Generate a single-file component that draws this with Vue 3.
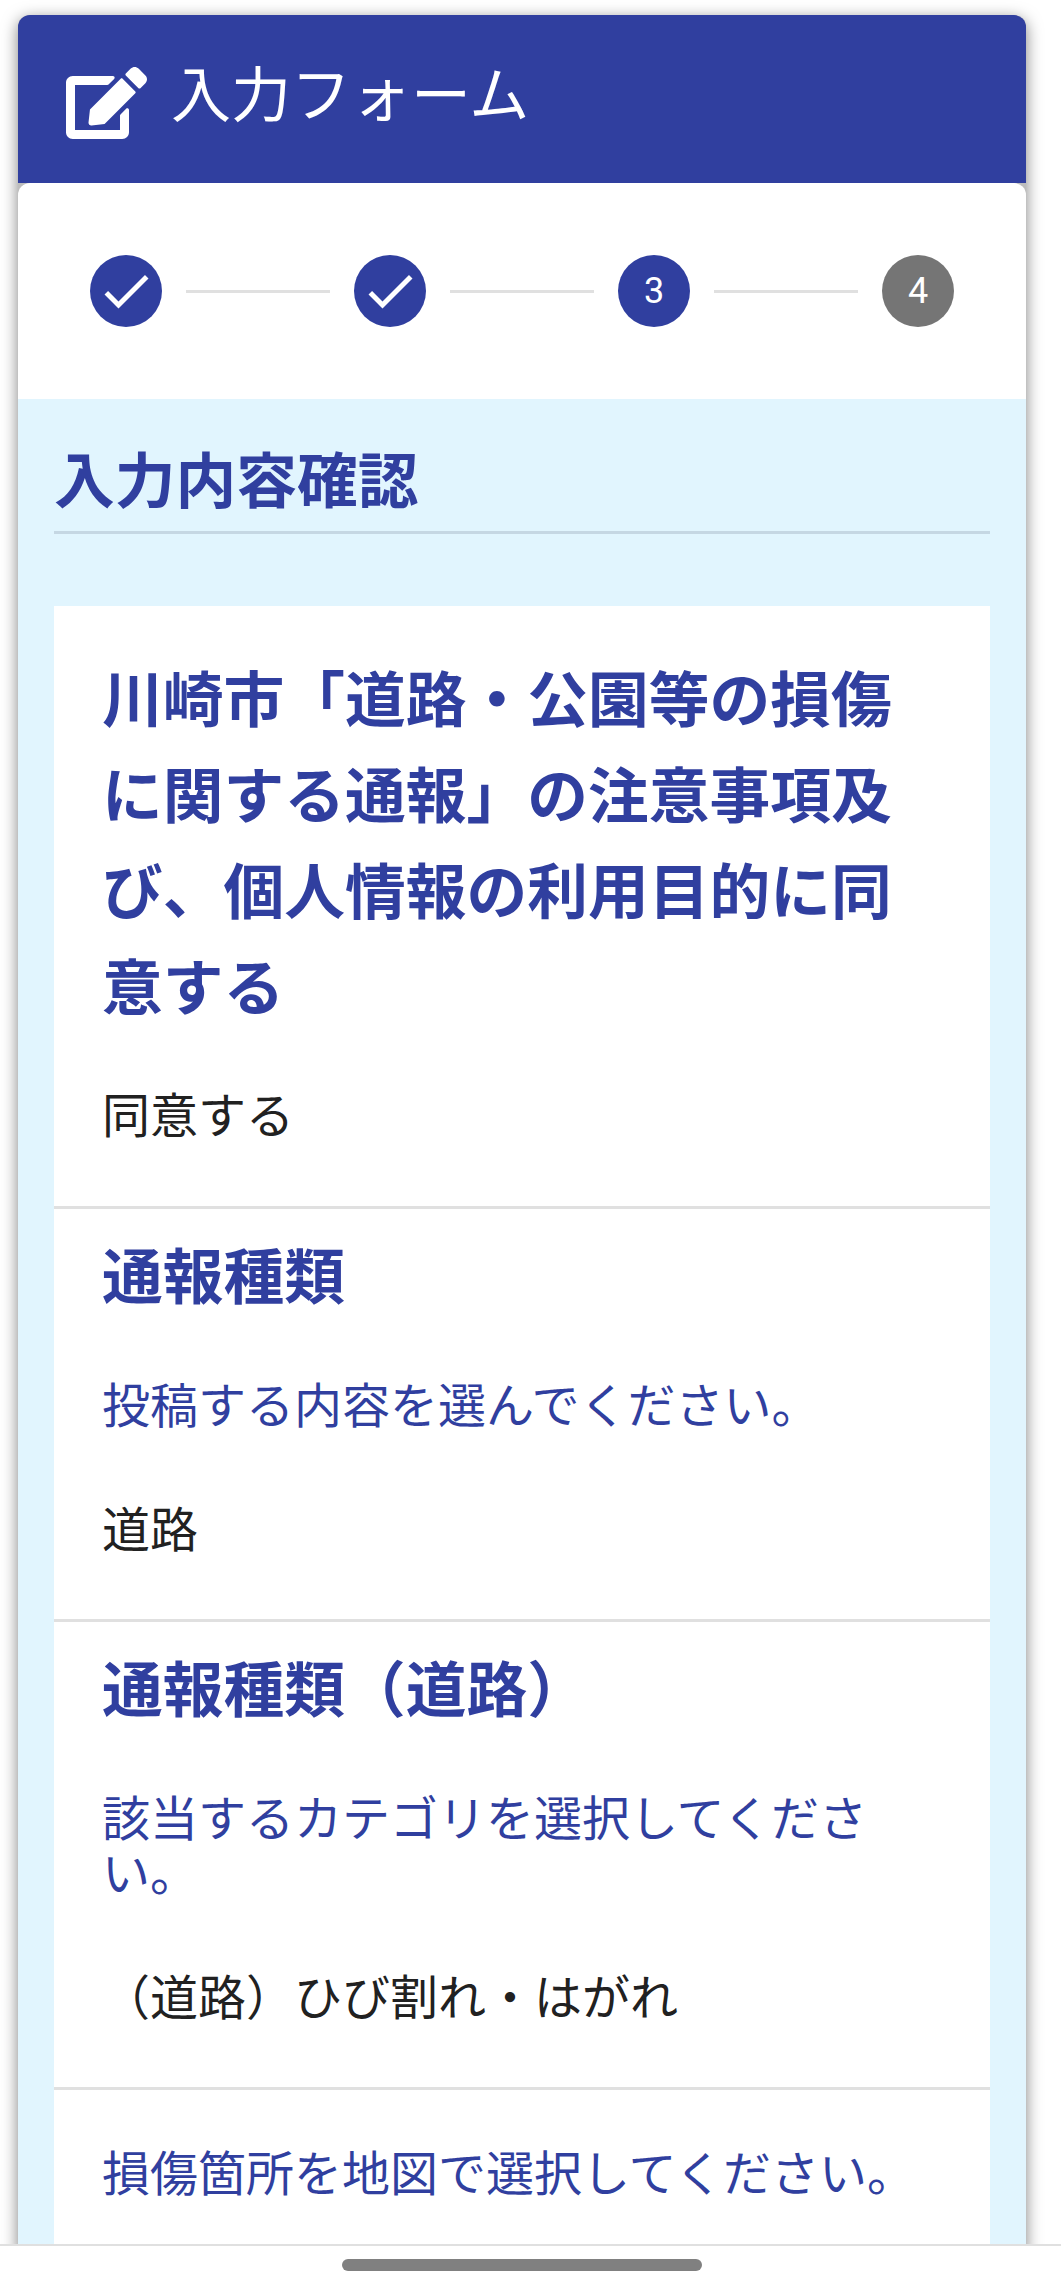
<template>
  <div class="page">
    <div class="form-card">
      <header class="form-header">
        <svg class="edit-icon" viewBox="0 0 576 512" aria-hidden="true">
          <path fill="#fff" d="M402.6 83.2l90.2 90.2c3.8 3.8 3.8 10 0 13.8L274.4 405.6l-92.8 10.3c-12.4 1.4-22.9-9.1-21.5-21.5l10.3-92.8L388.8 83.2c3.8-3.8 10-3.8 13.8 0zm162-22.9l-48.8-48.8c-15.2-15.2-39.9-15.2-55.2 0l-35.4 35.4c-3.8 3.8-3.8 10 0 13.8l90.2 90.2c3.8 3.8 10 3.8 13.8 0l35.4-35.4c15.2-15.3 15.2-40 0-55.2zM384 346.2V448H64V128h229.8c3.2 0 6.2-1.3 8.5-3.5l40-40c7.6-7.6 2.2-20.5-8.5-20.5H48C21.5 64 0 85.5 0 112v352c0 26.5 21.5 48 48 48h352c26.5 0 48-21.5 48-48V306.2c0-10.7-12.9-16-20.5-8.5l-40 40c-2.2 2.3-3.5 5.3-3.5 8.5z"/>
        </svg>
        <h1 class="form-title">入力フォーム</h1>
      </header>

      <div class="form-body">
        <div class="stepper">
          <template v-for="(step, i) in steps" :key="step.label">
            <div class="step" :class="{ pending: step.pending }">
              <svg v-if="step.done" class="check" viewBox="0 0 24 24" aria-hidden="true">
                <path fill="#fff" d="M9 16.17L4.83 12l-1.42 1.41L9 19 21 7l-1.41-1.41z"/>
              </svg>
              <span v-else>{{ step.label }}</span>
            </div>
            <div v-if="i < steps.length - 1" class="connector"></div>
          </template>
        </div>

        <section class="confirm">
          <h2 class="confirm-title">入力内容確認</h2>

          <div class="answers">
            <div class="answer-row first">
              <h3 class="question">川崎市「道路・公園等の損傷に関する通報」の注意事項及び、個人情報の利用目的に同意する</h3>
              <p class="answer">同意する</p>
            </div>
            <div class="answer-row">
              <h3 class="question">通報種類</h3>
              <p class="hint">投稿する内容を選んでください。</p>
              <p class="answer">道路</p>
            </div>
            <div class="answer-row">
              <h3 class="question">通報種類（道路）</h3>
              <p class="hint">該当するカテゴリを選択してください。</p>
              <p class="answer">（道路）ひび割れ・はがれ</p>
            </div>
            <div class="answer-row last">
              <p class="hint">損傷箇所を地図で選択してください。</p>
            </div>
          </div>
        </section>
      </div>
    </div>

    <div class="nav-bar">
      <div class="home-pill"></div>
    </div>
  </div>
</template>

<script setup>
const steps = [
  { label: '1', done: true },
  { label: '2', done: true },
  { label: '3' },
  { label: '4', pending: true }
]
</script>

<style>
body {
  margin: 0;
  background: #fff;
}
</style>

<style scoped>
.page {
  position: relative;
  height: 2291px;
  overflow: hidden;
  box-sizing: border-box;
  padding: 15px 35px 0 18px;
  background: #fff;
  font-family: Roboto, "Noto Sans CJK JP", sans-serif;
  color: #212121;
}

.form-card {
  border-radius: 12px 12px 0 0;
  box-shadow: 0 4px 16px rgba(0, 0, 0, 0.5);
  background: #bdbdbd;
}

.form-header {
  display: flex;
  align-items: center;
  height: 168px;
  padding-left: 48px;
  background: #303f9f;
  border-radius: 12px 12px 0 0;
  color: #fff;
}

.edit-icon {
  width: 81px;
  height: 72px;
  margin-top: 8px;
  flex-shrink: 0;
}

.form-title {
  margin: 0 0 4px 24px;
  font-size: 60px;
  font-weight: 400;
  line-height: 72px;
}

.form-body {
  background: #fff;
  border-radius: 12px 12px 0 0;
}

.stepper {
  display: flex;
  align-items: center;
  gap: 24px;
  padding: 72px 72px;
}

.step {
  width: 72px;
  height: 72px;
  flex-shrink: 0;
  display: flex;
  align-items: center;
  justify-content: center;
  border-radius: 50%;
  background: #303f9f;
  color: #fff;
  font-size: 36px;
}

.step.pending {
  background: #757575;
}

.check {
  width: 60px;
  height: 60px;
}

.connector {
  flex: 1;
  height: 3px;
  background: #e0e0e0;
}

.confirm {
  padding: 48px 36px 0;
  background: #e1f5fe;
}

.confirm-title {
  margin: 0;
  padding-bottom: 12px;
  border-bottom: 3px solid #c5d7e3;
  font-size: 60.75px;
  font-weight: 700;
  line-height: 72px;
  color: #303f9f;
}

.answers {
  margin-top: 72px;
  background: #fff;
}

.answer-row {
  padding: 22px 72px 52px 48px;
  border-bottom: 3px solid #e0e0e0;
}

.answer-row.first {
  padding-top: 48px;
  padding-bottom: 53px;
}

.answer-row.last {
  padding-top: 57px;
  border-bottom: none;
}

.question {
  margin: 0;
  font-size: 60.75px;
  font-weight: 700;
  line-height: 96px;
  color: #303f9f;
}

.hint {
  margin: 52px 0 0;
  font-size: 48px;
  line-height: 55px;
  color: #303f9f;
}

.answer-row.last .hint {
  margin-top: 0;
}

.answer {
  margin: 61px 0 0;
  font-size: 48px;
  line-height: 72px;
  color: #212121;
}

.answer-row.first .answer {
  margin-top: 43px;
}

.nav-bar {
  position: absolute;
  left: 0;
  right: 0;
  bottom: 0;
  height: 47px;
  display: flex;
  justify-content: center;
  padding: 13px 17px 0 0;
  box-sizing: border-box;
  background: #fff;
  border-top: 2px solid #e0e0e0;
}

.home-pill {
  width: 360px;
  height: 12px;
  border-radius: 6px;
  background: #808080;
}
</style>
